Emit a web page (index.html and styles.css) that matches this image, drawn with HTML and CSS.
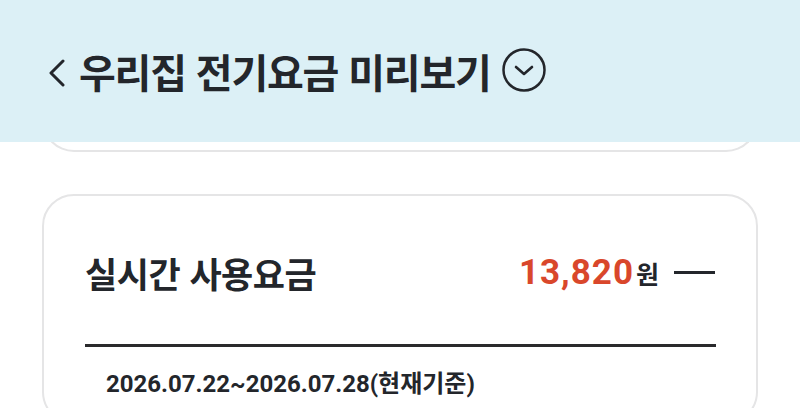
FILE: index.html
```html
<!DOCTYPE html>
<html lang="ko">
<head>
<meta charset="utf-8">
<title>우리집 전기요금 미리보기</title>
<link rel="stylesheet" href="styles.css">
</head>
<body>
<header class="topbar">
  <button class="back" aria-label="뒤로">
    <svg width="20" height="28" viewBox="0 0 20 28"><path d="M16 2 L4 14 L16 26" fill="none" stroke="#23262b" stroke-width="3" stroke-linecap="round" stroke-linejoin="round"/></svg>
  </button>
  <h1 class="title">우리집 전기요금 미리보기</h1>
  <span class="toggle" aria-hidden="true">
    <svg width="46" height="46" viewBox="0 0 46 46"><circle cx="23" cy="23" r="20.5" fill="none" stroke="#23262b" stroke-width="2.5"/><path d="M15 20 L23 27 L31 20" fill="none" stroke="#23262b" stroke-width="2.6" stroke-linecap="round" stroke-linejoin="round"/></svg>
  </span>
</header>
<main class="content">
  <section class="card card-prev"></section>
  <section class="card card-usage">
    <div class="usage-row">
      <h2 class="usage-title">실시간 사용요금</h2>
      <div class="usage-amount">
        <span class="price">13,820</span><span class="won">원</span>
        <span class="dash"></span>
      </div>
    </div>
    <hr class="divider">
    <p class="period">2026.07.22~2026.07.28(현재기준)</p>
  </section>
</main>
</body>
</html>
```
FILE: styles.css
```css
html, body {
  margin: 0;
  padding: 0;
  background: #ffffff;
  width: 800px;
  height: 408px;
  overflow: hidden;
  font-family: "Noto Sans CJK KR", "Noto Sans", sans-serif;
  color: #23262b;
}

.topbar {
  position: fixed;
  top: 0;
  left: 0;
  right: 0;
  height: 142px;
  background: #dcf0f6;
  display: flex;
  align-items: center;
  padding-left: 47px;
  box-sizing: border-box;
  z-index: 10;
}

.back {
  border: 0;
  background: none;
  padding: 0;
  margin: 0;
  width: 20px;
  height: 28px;
  display: flex;
  margin-top: 4px;
}

.title {
  margin: 0 0 0 12px;
  font-size: 40px;
  font-weight: 700;
  letter-spacing: -1.2px;
  line-height: 1;
  color: #23262b;
}

.toggle {
  display: flex;
  margin-left: 10px;
  margin-top: -2px;
}

.content {
  padding: 0 42px;
}

.card {
  border: 2px solid #e5e5e6;
  border-radius: 32px;
  background: #fff;
  box-sizing: border-box;
}

.card-prev {
  height: 153px;
  margin-top: -1px;
  border-top: 0;
}

.card-usage {
  margin-top: 42px;
  padding: 48px 40px 0 40px;
  height: 230px;
}

.usage-row {
  display: flex;
  align-items: center;
  justify-content: space-between;
  height: 56px;
}

.usage-title {
  margin: 0 0 0 1px;
  font-size: 35px;
  font-weight: 700;
  letter-spacing: -0.5px;
  line-height: 1;
  color: #23262b;
}

.usage-amount {
  display: flex;
  align-items: baseline;
}

.price {
  font-family: "Roboto", "Liberation Sans", sans-serif;
  font-weight: 700;
  font-size: 35px;
  letter-spacing: 1px;
  color: #d9472b;
}

.won {
  font-size: 25px;
  font-weight: 700;
  margin-left: 2px;
  color: #23262b;
}

.dash {
  align-self: center;
  width: 41px;
  height: 3px;
  background: #23262b;
  margin-left: 15px;
  margin-right: 1px;
}

.divider {
  border: 0;
  height: 3px;
  background: #2a2a2c;
  margin: 44px 0 0 1px;
}

.period {
  margin: 22px 0 0 22px;
  font-family: "Roboto", "Noto Sans CJK KR", sans-serif;
  font-size: 24px;
  font-weight: 700;
  line-height: 30px;
  color: #23262b;
}
```
